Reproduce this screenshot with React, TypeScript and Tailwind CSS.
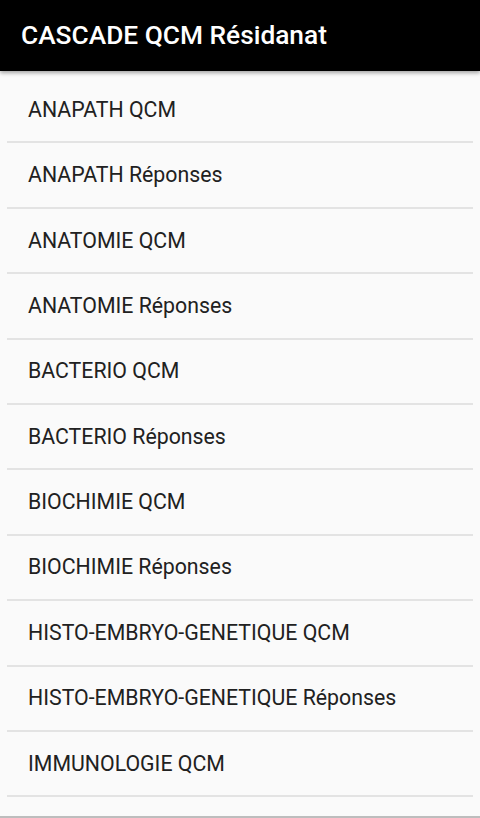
import React from 'react';

const items = [
  'ANAPATH QCM',
  'ANAPATH Réponses',
  'ANATOMIE QCM',
  'ANATOMIE Réponses',
  'BACTERIO QCM',
  'BACTERIO Réponses',
  'BIOCHIMIE QCM',
  'BIOCHIMIE Réponses',
  'HISTO-EMBRYO-GENETIQUE QCM',
  'HISTO-EMBRYO-GENETIQUE Réponses',
  'IMMUNOLOGIE QCM',
];

const App: React.FC = () => {
  return (
    <div className="w-[480px] h-[818px] overflow-hidden bg-[#fafafa] flex flex-col" style={{ fontFamily: 'Roboto, "Noto Sans", sans-serif' }}>
      {/* Toolbar */}
      <div className="relative z-10 h-[71px] shrink-0 bg-black flex items-center px-[21px] shadow-[0_2px_4px_rgba(0,0,0,0.35)]">
        <h1 className="text-white text-[26.3px] font-medium">CASCADE QCM Résidanat</h1>
      </div>

      {/* List */}
      <div className="flex-1 overflow-hidden pt-[7px]">
        {items.map((item) => (
          <div key={item} className="mx-[7px] h-[65.4px] box-border border-b-2 border-[#e3e3e3] flex items-center pl-[21px]">
            <span className="text-[21.3px] text-[#212121]">{item}</span>
          </div>
        ))}
      </div>
      <div className="h-[2px] shrink-0 bg-[#bdbdbd]" />
    </div>
  );
};

export default App;
